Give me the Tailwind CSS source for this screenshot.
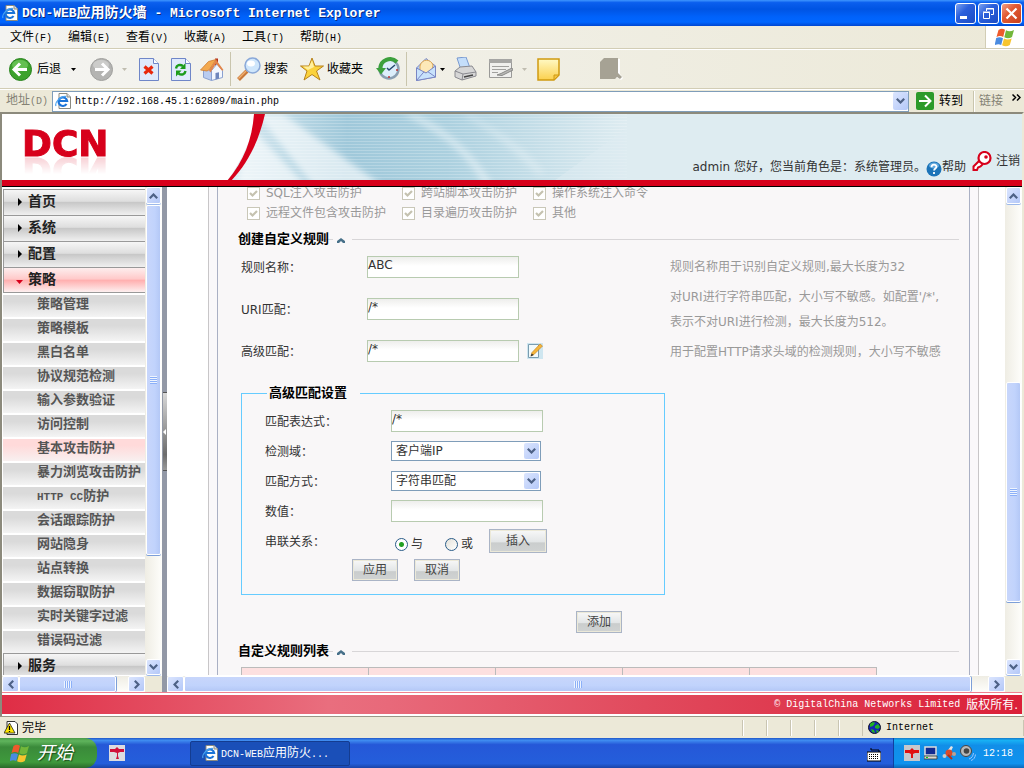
<!DOCTYPE html>
<html lang="zh-CN">
<head>
<meta charset="utf-8">
<title>DCN-WEB应用防火墙</title>
<script src="https://cdn.jsdelivr.net/npm/@tailwindcss/browser@4"></script>
</head>
<body class="h-screen overflow-hidden flex flex-col bg-[#ece9d8] text-black text-xs leading-4 font-['DejaVu_Sans','Noto_Sans_CJK_SC',sans-serif]">

<!-- shared symbols -->
<svg class="hidden">
  <symbol id="ie" viewBox="0 0 16 16"><path d="M4 .5h8l3.500 3.500v11.500H4z" fill="#fff" stroke="#8a8a80"/><path d="M12 .5V4h3.500" fill="#ddd" stroke="#8a8a80"/><path d="M11.500 11a4.300 4.300 0 1 1 .6-3H4" fill="none" stroke="#1b74d8" stroke-width="2.200"/><path d="M1 13C-.5 10 5 3 11 3.500" fill="none" stroke="#4aa3f0" stroke-width="1.200"/></symbol>
  <symbol id="up" viewBox="0 0 9 6"><path d="M.8 5.200 4.500 1.500 8.200 5.200" fill="none" stroke="#4d6185" stroke-width="2.200"/></symbol>
  <symbol id="down" viewBox="0 0 9 6"><path d="M.8.8 4.500 4.500 8.200.8" fill="none" stroke="#4d6185" stroke-width="2.200"/></symbol>
  <symbol id="left" viewBox="0 0 6 9"><path d="M5.200.8 1.500 4.500 5.200 8.200" fill="none" stroke="#4d6185" stroke-width="2.200"/></symbol>
  <symbol id="right" viewBox="0 0 6 9"><path d="M.8.8 4.500 4.500.8 8.200" fill="none" stroke="#4d6185" stroke-width="2.200"/></symbol>
  <symbol id="check" viewBox="0 0 13 13"><path d="M3 6 5.500 8.500 10 4" fill="none" stroke="#c5c2b0" stroke-width="2.200"/></symbol>
  <symbol id="caret" viewBox="0 0 5 3"><path d="M0 0h5L2.500 3z"/></symbol>
  <symbol id="tri" viewBox="0 0 4 8"><path d="M0 0 4 4 0 8z"/></symbol>
  <symbol id="collapse" viewBox="0 0 8 6"><path d="M0 6V4L4 1l4 3v2H6L4 4 2 6z" fill="#477089"/></symbol>
  <symbol id="flag" viewBox="0 0 20 19"><path d="M3.500 2C6 .3 8 .6 10 1.800L8.200 9C6.200 7.800 4 7.700 1.500 9z" fill="#ee5a2b"/><path d="M11 2.300c2.500 1.300 5 1.200 8-.3L17 9c-2.500 1.500-5 1.500-7.700.3z" fill="#72b73a"/><path d="M1.200 10c2.500-1.300 4.800-1 6.800.2L6.200 17C4.200 15.800 2.500 16-.3 17z" fill="#4a8be0"/><path d="M9 10.500c2.500 1.300 5 1.200 7.700 0L14.800 17c-2.500 1.500-5 1.500-7.700.3z" fill="#f7c52e"/></symbol>
</svg>

<!-- title bar -->
<header class="h-[26px] shrink-0 flex items-center pl-0.5 pr-0.5 bg-[linear-gradient(#3f96ff_0%,#0b5fee_10%,#0054e3_35%,#0062fb_65%,#0066ff_85%,#0046d0_100%)]">
  <svg class="w-4 h-4 mr-1"><use href="#ie"/></svg>
  <h1 class="flex-1 text-white font-bold text-[13px] leading-5 whitespace-pre font-['Liberation_Mono','Noto_Sans_CJK_SC',monospace] [text-shadow:1px_1px_0_#0a2a80]">DCN-WEB<span class="text-sm">应用防火墙</span> - Microsoft Internet Explorer</h1>
  <div class="flex gap-[2px]">
    <button aria-label="最小化" class="w-[21px] h-[21px] rounded-[3px] border border-white bg-[linear-gradient(135deg,#7ba1f0,#2a5fdc_40%,#1c4cc4)] flex items-end pl-1 pb-1"><span class="block w-[7px] h-[3px] bg-white"></span></button>
    <button aria-label="还原" class="w-[21px] h-[21px] rounded-[3px] border border-white bg-[linear-gradient(135deg,#7ba1f0,#2a5fdc_40%,#1c4cc4)] flex items-center justify-center"><svg class="w-[11px] h-[11px]" viewBox="0 0 11 11" fill="none" stroke="#fff"><path d="M3.500 3V.5h7v6H8"/><path d="M3 1h8"/><path d="M.5 4.500h6v6h-6zM0 4h7"/></svg></button>
    <button aria-label="关闭" class="w-[21px] h-[21px] rounded-[3px] border border-white bg-[linear-gradient(135deg,#f0a08a,#e25a34_40%,#c8401c)] flex items-center justify-center"><svg class="w-[13px] h-[13px]" viewBox="0 0 13 13"><path d="M1.500 1.500l10 10M11.500 1.500l-10 10" stroke="#fff" stroke-width="2.200"/></svg></button>
  </div>
</header>

<!-- menu bar -->
<nav class="h-[23px] shrink-0 flex items-stretch border-b border-[#d2cdb5] bg-[linear-gradient(90deg,#f4f4f1,#ece9d8)]">
  <div class="flex-1 flex items-center pl-[10px] pt-0.5 text-left">
    <button class="w-[58px] text-left">文件<span class="text-[10px] font-['Liberation_Mono',monospace]">(F)</span></button>
    <button class="w-[58px] text-left">编辑<span class="text-[10px] font-['Liberation_Mono',monospace]">(E)</span></button>
    <button class="w-[58px] text-left">查看<span class="text-[10px] font-['Liberation_Mono',monospace]">(V)</span></button>
    <button class="w-[58px] text-left">收藏<span class="text-[10px] font-['Liberation_Mono',monospace]">(A)</span></button>
    <button class="w-[58px] text-left">工具<span class="text-[10px] font-['Liberation_Mono',monospace]">(T)</span></button>
    <button class="w-[58px] text-left">帮助<span class="text-[10px] font-['Liberation_Mono',monospace]">(H)</span></button>
  </div>
  <div class="w-[39px] bg-white border-l border-[#d2cdb5] flex items-center justify-center"><svg class="w-5 h-[19px]"><use href="#flag"/></svg></div>
</nav>

<!-- toolbar -->
<div class="h-[40px] shrink-0 flex items-center border-t border-b border-t-white border-b-[#d2cdb5] pl-[9px] bg-[linear-gradient(90deg,#f4f4f1,#ece9d8)]">
  <button class="flex items-center"><svg class="w-[23px] h-[23px] mr-[5px]" viewBox="0 0 23 23"><circle cx="11.500" cy="11.500" r="11" fill="#3da22c" stroke="#2b8420"/><ellipse cx="11" cy="7" rx="8" ry="5" fill="#7fd46a" opacity=".6"/><path d="M11 5.500 5 11.500l6 6M5.500 11.500H18" fill="none" stroke="#fff" stroke-width="3"/></svg>后退</button>
  <svg class="w-[5px] h-[3px] ml-[10px] mr-[14px]"><use href="#caret"/></svg>
  <button aria-label="前进"><svg class="w-[23px] h-[23px]" viewBox="0 0 23 23"><circle cx="11.500" cy="11.500" r="11" fill="#b4b4b2" stroke="#a0a09e"/><ellipse cx="11" cy="7" rx="8" ry="5" fill="#dcdcda" opacity=".6"/><path d="M12 5.500l6 6-6 6M17.500 11.500H5" fill="none" stroke="#fff" stroke-width="3"/></svg></button>
  <svg class="w-[5px] h-[3px] ml-[9px] mr-[12px]"><use href="#caret" fill="#c0bdb0"/></svg>
  <button aria-label="停止"><svg class="w-5 h-[23px]" viewBox="0 0 20 23"><path d="M.5.5h14l5 5v17H.5z" fill="#dfeafc" stroke="#6f86c8"/><path d="M14.500.5v5h5" fill="#fff" stroke="#6f86c8"/><path d="M5.500 8.500l8 7M13.500 8.500l-8 7" stroke="#e8280c" stroke-width="3.200"/></svg></button>
  <button aria-label="刷新" class="ml-[12px]"><svg class="w-5 h-[23px]" viewBox="0 0 20 23"><path d="M.5.5h14l5 5v17H.5z" fill="#dfeafc" stroke="#6f86c8"/><path d="M14.500.5v5h5" fill="#fff" stroke="#6f86c8"/><path d="M5 10.500C5.500 7 9 6 12 8M14.500 13C14 16.500 10.500 17.500 7.500 15.500" fill="none" stroke="#1c9c1c" stroke-width="2.400"/><path d="M14.500 5v6H9zM5 18.500v-6h5.500z" fill="#1c9c1c"/></svg></button>
  <button aria-label="主页" class="ml-[9px]"><svg class="w-6 h-[23px]" viewBox="0 0 24 23"><path d="M15 .5h3v7h-3z" fill="#b5301e"/><path d="M3.500 12v7.500l8 3V10L7 7z" fill="#b9ccf0" stroke="#8aa0d0"/><path d="M11.500 12.500 17 6l5.500 6.500v7l-11 3z" fill="#f3f7fe" stroke="#8aa0d0"/><path d="M.5 12 8.500 3.500 16 1.500 9.500 11.500 7 13z" fill="#f3a94f" stroke="#cf7c30" stroke-width=".8"/><path d="M16 1.500 23.500 12l-1.500.8L16 5.500l-5.500 9-1.500-2z" fill="#e2854a"/><path d="M15.500 15l3.500-.8v6.300l-3.500 1z" fill="#6f86bc"/></svg></button>
  <span class="w-px h-[34px] bg-[#c9c5ad] ml-[6px] mr-[6px]"></span>
  <button class="flex items-center"><svg class="w-6 h-6 mr-[3px]" viewBox="0 0 24 24"><path d="M1.500 22.500 10 14" stroke="#c9793a" stroke-width="4"/><path d="M1.500 21.500 9 14" stroke="#f0b070" stroke-width="1.500"/><circle cx="15.500" cy="8.500" r="7.500" fill="#cfe6fb" stroke="#8aa8d8" stroke-width="1.500"/><ellipse cx="14" cy="6.500" rx="4" ry="3" fill="#fff"/></svg>搜索</button>
  <button class="flex items-center ml-[12px]"><svg class="w-6 h-6 mr-[3px]" viewBox="0 0 24 24"><path d="M12 1l3 8h8.500l-7 5 3.500 9-8-5.500L4 23l3-9-6.500-5H9z" fill="#fbd23c" stroke="#b8821c"/><path d="M12 3.500l2 6.500-6 3-5-3.500h6z" fill="#fff0a0"/></svg>收藏夹</button>
  <button aria-label="历史" class="ml-[13px]"><svg class="w-6 h-6" viewBox="0 0 24 24"><circle cx="13" cy="12" r="9.500" fill="#dceefb" stroke="#8a9fb2" stroke-width="2.500"/><path d="M19 8l-6 5-2-2" fill="none" stroke="#284a70" stroke-width="1.500"/><path d="M21 5C15-1 4 3 4.500 12" fill="none" stroke="#3ca03c" stroke-width="4"/><path d="M0 11h10l-5 6.500z" fill="#3ca03c"/><path d="M13 19v2M20 13h2" stroke="#c03030" stroke-width="1.500"/></svg></button>
  <span class="w-px h-[34px] bg-[#c9c5ad] ml-[6px] mr-[9px]"></span>
  <button aria-label="邮件"><svg class="w-5 h-[23px]" viewBox="0 0 20 23"><path d="M.5 10 10 .5 19.500 8v11L.5 22.500z" fill="#b5d4f8" stroke="#7a86c4"/><path d="M4 8c2-8 11-7 13-1l-1 6-6 2-6-2z" fill="#fde9b8" stroke="#e0a850"/><path d="M.5 10 10 15l9.500-7v11L.5 22.500z" fill="#c8e2fc" stroke="#7a86c4"/><path d="M.5 22.500 8 13.800M19.500 19 12 13.800" stroke="#7a86c4"/></svg></button>
  <svg class="w-[5px] h-[3px] ml-[4px] mr-[9px]"><use href="#caret"/></svg>
  <button aria-label="打印"><svg class="w-[23px] h-6" viewBox="0 0 23 24"><path d="M3 1l9-1 4 11-9 2z" fill="#c4defa" stroke="#7a9ad0"/><path d="M1 14l5-4 12-1 4 6v4L8 23l-7-3z" fill="#d6d6d6" stroke="#8a8a90"/><path d="M1 14l8 3 13-2M9 17l-1 6" fill="none" stroke="#8a8a90"/><path d="M10 20l9-2" stroke="#444" stroke-width="1.500"/></svg></button>
  <button aria-label="编辑" class="ml-[12px]"><svg class="w-6 h-5" viewBox="0 0 24 20"><path d="M.5.5h22v18H.5z" fill="#efefed" stroke="#9a9a98"/><path d="M0 0h23v4H0z" fill="#a6a6a4"/><path d="M3 7.500h17M3 10.500h14M3 13.500h6" stroke="#a0a09e"/><path d="M8 16l4-1.500L23 9l1 2-11 5.500z" fill="#b8b8b6" stroke="#8a8a88"/></svg></button>
  <svg class="w-[5px] h-[3px] ml-[9px] mr-[10px]"><use href="#caret" fill="#c0bdb0"/></svg>
  <button aria-label="便笺"><svg class="w-[23px] h-[23px]" viewBox="0 0 23 23"><defs><linearGradient id="note" x2="0" y2="1"><stop offset="0" stop-color="#fff9c4"/><stop offset="1" stop-color="#fbd04e"/></linearGradient></defs><path d="M1 1h21v16l-5 5H1z" fill="url(#note)" stroke="#d09a10" stroke-width="1.500"/><path d="M17 22v-5h5z" fill="#f3c244" stroke="#d09a10"/></svg></button>
  <svg class="w-[23px] h-[23px] ml-[40px]" viewBox="0 0 23 23"><path d="M5 1h15v15l3 4-2 2-3-2H1V5z" fill="#fff"/><path d="M4 0h14v15l4 4-2 2-3-2-2 2H0V4z" fill="#a6a294"/></svg>
</div>

<!-- address bar -->
<div class="h-[23px] shrink-0 flex items-center border-t border-white bg-[#ece9d8] pl-[6px]">
  <label for="url" class="w-[46px] text-[#848274]">地址<span class="text-[10px] font-['Liberation_Mono',monospace]">(D)</span></label>
  <div class="flex-1 h-[21px] flex items-center bg-white border border-[#7f9db9] pl-0.5">
    <svg class="w-4 h-4 mr-1"><use href="#ie"/></svg>
    <input id="url" value="http://192.168.45.1:62809/main.php" class="flex-1 min-w-0 pt-0.5 outline-none text-[10px] leading-4 font-['Liberation_Mono',monospace]">
    <button aria-label="展开" class="w-[15px] h-[18px] rounded-[2px] bg-[linear-gradient(135deg,#dbe5fe,#b4c8f8)] flex items-center justify-center"><svg class="w-[9px] h-[6px]"><use href="#down"/></svg></button>
  </div>
  <button class="flex items-center gap-[5px] ml-[7px]"><svg class="w-[18px] h-[18px]" viewBox="0 0 18 18"><rect width="18" height="18" rx="2" fill="#2c9a2a"/><path d="M9 3.500 14.500 9 9 14.500M3 9h11" fill="none" stroke="#fff" stroke-width="2"/></svg>转到</button>
  <span class="w-0.5 h-[21px] border-l border-[#c9c5ad] bg-white ml-[10px] mr-[4px]"></span>
  <span class="text-[#848274]">链接</span>
  <svg class="w-[9px] h-[7px] ml-[9px] mr-[3px] mb-2" viewBox="0 0 9 7"><path d="M.5.5l3 3-3 3M5 .5l3 3-3 3" fill="none" stroke="#000" stroke-width="1.500"/></svg>
</div>

<!-- browser viewport -->
<main class="flex-1 min-h-0 flex flex-col border-t-2 border-t-[#8c8a7c] border-l-2 border-l-[#8c8a7c] border-r-2 border-r-[#ece9d8] bg-white">

  <!-- site banner -->
  <section class="h-[73px] shrink-0 relative flex items-end border-b border-black bg-[#deecf1]">
    <svg class="absolute inset-0 w-full h-[72px]" viewBox="0 0 1020 72" preserveAspectRatio="xMinYMin slice">
      <defs>
        <linearGradient id="sky"><stop offset="0" stop-color="#d9eaf1"/><stop offset=".3" stop-color="#9fc8da"/><stop offset=".55" stop-color="#abd0df"/><stop offset="1" stop-color="#deecf1"/></linearGradient>
        <pattern id="lines" width="4" height="3" patternUnits="userSpaceOnUse"><path d="M0 .5h4" stroke="#fff" stroke-opacity=".22"/></pattern>
        <filter id="soft"><feGaussianBlur stdDeviation="3"/></filter>
      </defs>
      <path d="M225 0h400v72H225z" fill="url(#sky)"/>
      <path d="M225 0h400v72H225z" fill="url(#lines)"/>
      <g filter="url(#soft)" fill="#fff">
        <path d="M255 0h26l100 72h-70z" opacity=".6"/>
        <path d="M245 10l60 62h-70z" opacity=".6"/>
        <path d="M400 0h14c35 15 62 45 78 72h-10C465 40 440 20 400 0z" opacity=".4"/>
        <path d="M460 0h8c25 15 55 30 75 60h-8C510 35 490 18 460 0z" opacity=".25"/>
      </g>
      <path d="M625 14l-80 58h80z" fill="#deecf1" opacity=".5"/>
      <path d="M0 0h255c-6 26-16 48-30 67H0z" fill="#fff"/>
      <path d="M252 0h11c-6 26-16 48-34 67h-4c17-20 25-41 27-67z" fill="#d7001b"/>
      <path d="M0 66h1400v6H0z" fill="#d7001b"/>
    </svg>
    <div class="relative w-full flex items-start pl-[20px] pr-0.5 h-[56px] text-[#333]">
      <strong class="flex-1 text-[36px] leading-[28px] font-bold text-[#d7001b] font-['DejaVu_Sans',sans-serif] [-webkit-text-stroke:1px_#d7001b] [-webkit-box-reflect:below_-2px_linear-gradient(transparent_35%,rgb(0_0_0/0.2))]">DCN</strong>
      <p class="mt-[28px]">admin 您好<span class="font-['Noto_Sans_CJK_TC',sans-serif]">，</span>您当前角色是<span class="font-['Noto_Sans_CJK_TC',sans-serif]">：</span>系统管理员。</p>
      <a href="#" class="flex items-center mt-[27px]"><svg class="w-4 h-4 mt-1" viewBox="0 0 16 16"><circle cx="8" cy="8" r="7.500" fill="#1c74b8"/><ellipse cx="8" cy="4.500" rx="5" ry="3" fill="#7fc0ee" opacity=".7"/><path d="M5.500 6.200c0-3.400 5-3.200 5-.4 0 1.800-2.400 1.700-2.400 3.700M8 11v2" fill="none" stroke="#fff" stroke-width="1.800"/></svg>帮助</a>
      <a href="#" class="flex items-center gap-1 ml-[6px] mt-[21px]"><svg class="w-5 h-5" viewBox="0 0 20 20"><path d="M7.500 9.500 1.500 15.500v3.500h3.500l1-2.500 2.500-1 2.500-2.500" fill="#fff" stroke="#d7001b" stroke-width="2"/><circle cx="12.500" cy="7" r="6" fill="#fff" stroke="#d7001b" stroke-width="2.200"/><circle cx="14" cy="6" r="1.800" fill="#d7001b"/></svg>注销</a>
    </div>
  </section>

  <div class="flex-1 min-h-0 flex">

    <!-- navigation frame -->
    <aside class="w-[160px] shrink-0 flex flex-col">
      <div class="flex-1 min-h-0 flex">
        <ul class="flex-1 min-h-0 overflow-hidden pl-px pt-0.5 text-sm leading-5 font-bold text-[#222] font-['Liberation_Mono','Noto_Sans_CJK_SC',monospace]">
          <li class="h-[26px] border-t border-l border-[#999] bg-[linear-gradient(#f6f6f6,#dedede_45%,#c8c8c8_50%,#f0f0f0)]"><a href="#" class="flex items-center h-6 pl-[14px] gap-[6px]"><svg class="w-1 h-2"><use href="#tri"/></svg>首页</a></li>
          <li class="h-[26px] border-t border-l border-[#999] bg-[linear-gradient(#f6f6f6,#dedede_45%,#c8c8c8_50%,#f0f0f0)]"><a href="#" class="flex items-center h-6 pl-[14px] gap-[6px]"><svg class="w-1 h-2"><use href="#tri"/></svg>系统</a></li>
          <li class="h-[26px] border-t border-l border-[#999] bg-[linear-gradient(#f6f6f6,#dedede_45%,#c8c8c8_50%,#f0f0f0)]"><a href="#" class="flex items-center h-6 pl-[14px] gap-[6px]"><svg class="w-1 h-2"><use href="#tri"/></svg>配置</a></li>
          <li>
            <a href="#" class="flex items-center h-[26px] pl-3 gap-[5px] border-t border-b border-l border-[#999] bg-[linear-gradient(#fdeeee,#ffcaca_45%,#ffb0b0_52%,#fdf0f0)]"><svg class="w-[7px] h-1 mt-1" viewBox="0 0 7 4"><path d="M0 0h7L3.500 4z" fill="#d7001b"/></svg>策略</a>
            <ul class="flex flex-col gap-[2px] pt-0.5 text-[13px] leading-5 text-[#555]">
              <li class="h-[22px] pl-[34px] whitespace-nowrap bg-[linear-gradient(#dadada_30%,#f4f4f4)]"><a href="#">策略管理</a></li>
              <li class="h-[22px] pl-[34px] whitespace-nowrap bg-[linear-gradient(#dadada_30%,#f4f4f4)]"><a href="#">策略模板</a></li>
              <li class="h-[22px] pl-[34px] whitespace-nowrap bg-[linear-gradient(#dadada_30%,#f4f4f4)]"><a href="#">黑白名单</a></li>
              <li class="h-[22px] pl-[34px] whitespace-nowrap bg-[linear-gradient(#dadada_30%,#f4f4f4)]"><a href="#">协议规范检测</a></li>
              <li class="h-[22px] pl-[34px] whitespace-nowrap bg-[linear-gradient(#dadada_30%,#f4f4f4)]"><a href="#">输入参数验证</a></li>
              <li class="h-[22px] pl-[34px] whitespace-nowrap bg-[linear-gradient(#dadada_30%,#f4f4f4)]"><a href="#">访问控制</a></li>
              <li class="h-[22px] pl-[34px] whitespace-nowrap bg-[linear-gradient(#ffdada_30%,#f8f0f0)]"><a href="#">基本攻击防护</a></li>
              <li class="h-[22px] pl-[34px] whitespace-nowrap bg-[linear-gradient(#dadada_30%,#f4f4f4)]"><a href="#">暴力浏览攻击防护</a></li>
              <li class="h-[22px] pl-[34px] whitespace-nowrap bg-[linear-gradient(#dadada_30%,#f4f4f4)]"><a href="#"><span class="text-[11px]">HTTP CC</span>防护</a></li>
              <li class="h-[22px] pl-[34px] whitespace-nowrap bg-[linear-gradient(#dadada_30%,#f4f4f4)]"><a href="#">会话跟踪防护</a></li>
              <li class="h-[22px] pl-[34px] whitespace-nowrap bg-[linear-gradient(#dadada_30%,#f4f4f4)]"><a href="#">网站隐身</a></li>
              <li class="h-[22px] pl-[34px] whitespace-nowrap bg-[linear-gradient(#dadada_30%,#f4f4f4)]"><a href="#">站点转换</a></li>
              <li class="h-[22px] pl-[34px] whitespace-nowrap bg-[linear-gradient(#dadada_30%,#f4f4f4)]"><a href="#">数据窃取防护</a></li>
              <li class="h-[22px] pl-[34px] whitespace-nowrap bg-[linear-gradient(#dadada_30%,#f4f4f4)]"><a href="#">实时关键字过滤</a></li>
              <li class="h-[22px] pl-[34px] whitespace-nowrap bg-[linear-gradient(#dadada_30%,#f4f4f4)]"><a href="#">错误码过滤</a></li>
            </ul>
          </li>
          <li class="h-[26px] border-t border-l border-[#999] bg-[linear-gradient(#f6f6f6,#dedede_45%,#c8c8c8_50%,#f0f0f0)]"><a href="#" class="flex items-center h-6 pl-[14px] gap-[6px]"><svg class="w-1 h-2"><use href="#tri"/></svg>服务</a></li>
        </ul>
        <div class="w-[17px] flex flex-col items-stretch bg-[linear-gradient(90deg,#efede4,#fefefb)] pl-px pr-px">
          <button aria-label="向上滚动" class="h-[17px] rounded-[2px] border border-white bg-[linear-gradient(135deg,#dbe5fe,#b4c8f8)] shadow-[0_1px_0_#9db9ea] flex items-center justify-center"><svg class="w-[9px] h-[6px]"><use href="#up"/></svg></button>
          <div class="h-[350px] mt-px rounded-[2px] border border-white bg-[linear-gradient(90deg,#c8d6fb,#c1d3fc_60%,#b4c8f6)] shadow-[0_1px_0_#7d9fd8] flex items-center justify-center"><span class="w-[7px] h-2 bg-[repeating-linear-gradient(#eef4fe_0_1px,#8cb0f8_1px_2px)]"></span></div>
          <button aria-label="向下滚动" class="h-4 mt-auto rounded-[2px] border border-white bg-[linear-gradient(135deg,#dbe5fe,#b4c8f8)] shadow-[0_1px_0_#9db9ea] flex items-center justify-center"><svg class="w-[9px] h-[6px]"><use href="#down"/></svg></button>
        </div>
      </div>
      <div class="h-4 mt-px flex bg-[#ece9d8]">
        <div class="flex-1 flex bg-[linear-gradient(#efede4,#fefefb)]">
          <button aria-label="向左滚动" class="w-[17px] rounded-[2px] border border-white bg-[linear-gradient(135deg,#dbe5fe,#b4c8f8)] flex items-center justify-center"><svg class="w-[6px] h-[9px]"><use href="#left"/></svg></button>
          <div class="w-[97px] rounded-[2px] border border-white bg-[linear-gradient(#c8d6fb,#c1d3fc_60%,#b4c8f6)] shadow-[1px_0_0_#7d9fd8] flex items-center justify-center"><span class="w-2 h-[7px] bg-[repeating-linear-gradient(90deg,#eef4fe_0_1px,#8cb0f8_1px_2px)]"></span></div>
          <button aria-label="向右滚动" class="w-[17px] ml-auto rounded-[2px] border border-white bg-[linear-gradient(135deg,#dbe5fe,#b4c8f8)] flex items-center justify-center"><svg class="w-[6px] h-[9px]"><use href="#right"/></svg></button>
        </div>
        <div class="w-[17px]"></div>
      </div>
    </aside>

    <!-- splitter -->
    <div class="w-[5px] shrink-0 bg-[#9298a6] flex flex-col justify-center items-end pb-4">
      <button aria-label="收起导航" class="w-1 h-[79px] bg-[linear-gradient(#d8d8d8,#6c6c6c_80%,#999)] border-t border-b border-[#555] flex items-center"><svg class="w-[3px] h-[6px]" viewBox="0 0 3 6"><path d="M3 0v6L0 3z" fill="#fff"/></svg></button>
    </div>

    <!-- content frame -->
    <div class="flex-1 min-w-0 flex flex-col">
      <div class="flex-1 min-h-0 flex">
        <div class="flex-1 min-w-0 overflow-hidden pl-[41px] pr-[26px]">
          <div class="border-l border-r border-[#c8c6c8] bg-[#faf8fa] px-2">
            <form class="border-l border-r border-[#aab0c4] bg-[#f9f7f8] pl-[20px] pr-[10px] text-[#333]">

              <!-- the pane is scrolled, so the first option row is cut by its top edge -->
              <div class="-mt-1 pl-[9px] grid grid-cols-[155px_131px_1fr] text-[#999]">
                <label class="h-5 flex items-center gap-[6px]"><span class="grid"><input type="checkbox" checked disabled class="[grid-area:1/1] appearance-none w-[13px] h-[13px] border border-[#c9c7b8] bg-white"><svg class="[grid-area:1/1] w-[13px] h-[13px]"><use href="#check"/></svg></span>SQL注入攻击防护</label>
                <label class="h-5 flex items-center gap-[6px]"><span class="grid"><input type="checkbox" checked disabled class="[grid-area:1/1] appearance-none w-[13px] h-[13px] border border-[#c9c7b8] bg-white"><svg class="[grid-area:1/1] w-[13px] h-[13px]"><use href="#check"/></svg></span>跨站脚本攻击防护</label>
                <label class="h-5 flex items-center gap-[6px]"><span class="grid"><input type="checkbox" checked disabled class="[grid-area:1/1] appearance-none w-[13px] h-[13px] border border-[#c9c7b8] bg-white"><svg class="[grid-area:1/1] w-[13px] h-[13px]"><use href="#check"/></svg></span>操作系统注入命令</label>
                <label class="h-5 flex items-center gap-[6px]"><span class="grid"><input type="checkbox" checked disabled class="[grid-area:1/1] appearance-none w-[13px] h-[13px] border border-[#c9c7b8] bg-white"><svg class="[grid-area:1/1] w-[13px] h-[13px]"><use href="#check"/></svg></span>远程文件包含攻击防护</label>
                <label class="h-5 flex items-center gap-[6px]"><span class="grid"><input type="checkbox" checked disabled class="[grid-area:1/1] appearance-none w-[13px] h-[13px] border border-[#c9c7b8] bg-white"><svg class="[grid-area:1/1] w-[13px] h-[13px]"><use href="#check"/></svg></span>目录遍历攻击防护</label>
                <label class="h-5 flex items-center gap-[6px]"><span class="grid"><input type="checkbox" checked disabled class="[grid-area:1/1] appearance-none w-[13px] h-[13px] border border-[#c9c7b8] bg-white"><svg class="[grid-area:1/1] w-[13px] h-[13px]"><use href="#check"/></svg></span>其他</label>
              </div>

              <h2 class="mt-[6px] h-5 flex items-center text-[13px] font-bold text-black"><span class="pr-1 bg-[linear-gradient(#d8d6d8,#d8d6d8)] bg-[length:100%_1px] bg-center bg-no-repeat">创建自定义规则</span><svg class="w-2 h-[6px] ml-1 mr-[7px] mt-0.5"><use href="#collapse"/></svg><span class="flex-1 h-px bg-[#d8d6d8]"></span></h2>

              <div class="pl-[3px] -mt-[3px]">
                <div class="h-[42px] flex items-center"><label for="name" class="w-[126px]">规则名称<span class="font-['Noto_Sans_CJK_TC',sans-serif]">：</span></label><span class="w-[303px]"><input id="name" value="ABC" class="w-[152px] h-[22px] pb-1 border border-[#b8cbb0] bg-[linear-gradient(#eeeeec,#fff_45%)] outline-none"></span><span class="text-[#999]">规则名称用于识别自定义规则,最大长度为32</span></div>
                <div class="h-[42px] flex items-center"><label for="uri" class="w-[126px]">URI匹配<span class="font-['Noto_Sans_CJK_TC',sans-serif]">：</span></label><span class="w-[303px]"><input id="uri" value="/*" class="w-[152px] h-[22px] pb-1 border border-[#b8cbb0] bg-[linear-gradient(#eeeeec,#fff_45%)] outline-none"></span><span class="text-[#999] leading-6 whitespace-nowrap">对URI进行字符串匹配<span class="font-['Noto_Sans_CJK_TC',sans-serif]">，</span>大小写不敏感。如配置'/*',<br>表示不对URI进行检测<span class="font-['Noto_Sans_CJK_TC',sans-serif]">，</span>最大长度为512。</span></div>
                <div class="h-[42px] flex items-center"><label for="adv" class="w-[126px]">高级匹配<span class="font-['Noto_Sans_CJK_TC',sans-serif]">：</span></label><span class="w-[303px] flex items-center gap-2"><input id="adv" value="/*" class="w-[152px] h-[22px] pb-1 border border-[#b8cbb0] bg-[linear-gradient(#eeeeec,#fff_45%)] outline-none"><button type="button" aria-label="编辑高级匹配"><svg class="w-4 h-4" viewBox="0 0 16 16"><path d="M0 0h16v16H0z" fill="#cfe6f0"/><path d="M1.500 1.500h10v13h-10z" fill="#f2fafc" stroke="#7a9cb0"/><path d="M4 13l1-3.500L13 1l2.500 2L7 11.500z" fill="#f5b53a" stroke="#c07a18" stroke-width=".6"/><path d="M3.500 13.500l1.200-3 2 1.500z" fill="#333"/></svg></button></span><span class="text-[#999]">用于配置HTTP请求头域的检测规则<span class="font-['Noto_Sans_CJK_TC',sans-serif]">，</span>大小写不敏感</span></div>
              </div>

              <fieldset class="ml-[3px] mt-[11px] w-[424px] border border-[#66ccff] pl-[23px] pb-[10px]">
                <legend class="w-[93px] ml-[2px] h-5 leading-5 pl-0.5 text-[13px] font-bold text-black">高级匹配设置</legend>
                <div class="h-[30px] mt-[3px] flex items-center"><label for="expr" class="w-[126px]">匹配表达式<span class="font-['Noto_Sans_CJK_TC',sans-serif]">：</span></label><input id="expr" value="/*" class="w-[152px] h-[22px] pb-1 border border-[#b8cbb0] bg-[linear-gradient(#eeeeec,#fff_45%)] outline-none"></div>
                <div class="h-[30px] flex items-center"><label for="field" class="w-[126px]">检测域<span class="font-['Noto_Sans_CJK_TC',sans-serif]">：</span></label><span class="grid w-[150px] items-center"><select id="field" class="[grid-area:1/1] appearance-none h-5 pl-1 border border-[#7f9db9] bg-white outline-none"><option>客户端IP</option></select><span class="[grid-area:1/1] justify-self-end mr-0.5 w-[15px] h-4 rounded-[2px] pointer-events-none bg-[linear-gradient(135deg,#dbe5fe,#b4c8f8)] flex items-center justify-center"><svg class="w-[9px] h-[6px]"><use href="#down"/></svg></span></span></div>
                <div class="h-[30px] flex items-center"><label for="mode" class="w-[126px]">匹配方式<span class="font-['Noto_Sans_CJK_TC',sans-serif]">：</span></label><span class="grid w-[150px] items-center"><select id="mode" class="[grid-area:1/1] appearance-none h-5 pl-1 border border-[#7f9db9] bg-white outline-none"><option>字符串匹配</option></select><span class="[grid-area:1/1] justify-self-end mr-0.5 w-[15px] h-4 rounded-[2px] pointer-events-none bg-[linear-gradient(135deg,#dbe5fe,#b4c8f8)] flex items-center justify-center"><svg class="w-[9px] h-[6px]"><use href="#down"/></svg></span></span></div>
                <div class="h-[30px] flex items-center"><label for="num" class="w-[126px]">数值<span class="font-['Noto_Sans_CJK_TC',sans-serif]">：</span></label><input id="num" class="w-[152px] h-[22px] pb-1 border border-[#b8cbb0] bg-[linear-gradient(#eeeeec,#fff_45%)] outline-none"></div>
                <div class="h-[30px] flex items-center"><span class="w-[130px]">串联关系<span class="font-['Noto_Sans_CJK_TC',sans-serif]">：</span></span>
                  <label class="flex items-center gap-[3px] w-[50px] pt-[6px]"><input type="radio" name="rel" checked class="appearance-none w-[13px] h-[13px] rounded-full border border-[#2a5c88] bg-[radial-gradient(circle,#22a022_0_2px,#fff_3px)]">与</label>
                  <label class="flex items-center gap-[3px] w-[44px] pt-[6px]"><input type="radio" name="rel" class="appearance-none w-[13px] h-[13px] rounded-full border border-[#2a5c88] bg-[linear-gradient(135deg,#e4e2da,#fff)]">或</label>
                  <button type="button" class="w-[58px] h-6 border border-[#aab4c6] bg-[linear-gradient(#f8f8f8,#e2e5e6_55%,#cacdcd_58%,#d0d3d3)] shadow-[inset_0_0_0_1px_#ece9d8] text-[#444]">插入</button>
                </div>
                <div class="h-7 pl-[87px] flex items-center gap-4">
                  <button type="button" class="w-[46px] h-[22px] border border-[#aab4c6] bg-[linear-gradient(#f8f8f8,#e2e5e6_55%,#cacdcd_58%,#d0d3d3)] shadow-[inset_0_0_0_1px_#ece9d8] text-[#444]">应用</button>
                  <button type="button" class="w-[46px] h-[22px] border border-[#aab4c6] bg-[linear-gradient(#f8f8f8,#e2e5e6_55%,#cacdcd_58%,#d0d3d3)] shadow-[inset_0_0_0_1px_#ece9d8] text-[#444]">取消</button>
                </div>
              </fieldset>

              <div class="mt-4 w-[722px] flex justify-center">
                <button type="button" class="w-[46px] h-[22px] border border-[#aab4c6] bg-[linear-gradient(#f8f8f8,#e2e5e6_55%,#cacdcd_58%,#d0d3d3)] shadow-[inset_0_0_0_1px_#ece9d8] text-[#444]">添加</button>
              </div>

              <h2 class="mt-[8px] h-5 flex items-center text-[13px] font-bold text-black"><span class="pr-1 bg-[linear-gradient(#d8d6d8,#d8d6d8)] bg-[length:100%_1px] bg-center bg-no-repeat">自定义规则列表</span><svg class="w-2 h-[6px] ml-1 mr-[7px] mt-0.5"><use href="#collapse"/></svg><span class="flex-1 h-px bg-[#d8d6d8]"></span></h2>
              <table class="ml-[3px] mt-[6px] w-[636px] table-fixed border-collapse bg-[#fde0e0]"><tbody><tr class="h-[26px]"><td class="border border-[#bbb]"></td><td class="border border-[#bbb]"></td><td class="border border-[#bbb]"></td><td class="border border-[#bbb]"></td><td class="border border-[#bbb]"></td></tr></tbody></table>
            </form>
          </div>
        </div>
        <div class="w-[17px] shrink-0 flex flex-col bg-[linear-gradient(90deg,#efede4,#fefefb)] pl-px pr-px">
          <button aria-label="向上滚动" class="h-[17px] rounded-[2px] border border-white bg-[linear-gradient(135deg,#dbe5fe,#b4c8f8)] shadow-[0_1px_0_#9db9ea] flex items-center justify-center"><svg class="w-[9px] h-[6px]"><use href="#up"/></svg></button>
          <div class="h-[220px] mt-[178px] rounded-[2px] border border-white bg-[linear-gradient(90deg,#c8d6fb,#c1d3fc_60%,#b4c8f6)] shadow-[0_1px_0_#7d9fd8] flex items-center justify-center"><span class="w-[7px] h-2 bg-[repeating-linear-gradient(#eef4fe_0_1px,#8cb0f8_1px_2px)]"></span></div>
          <button aria-label="向下滚动" class="h-4 mt-auto rounded-[2px] border border-white bg-[linear-gradient(135deg,#dbe5fe,#b4c8f8)] shadow-[0_1px_0_#9db9ea] flex items-center justify-center"><svg class="w-[9px] h-[6px]"><use href="#down"/></svg></button>
        </div>
      </div>
      <div class="h-4 mt-px flex bg-[#ece9d8]">
        <div class="flex-1 flex bg-[linear-gradient(#efede4,#fefefb)]">
          <button aria-label="向左滚动" class="w-[17px] rounded-[2px] border border-white bg-[linear-gradient(135deg,#dbe5fe,#b4c8f8)] flex items-center justify-center"><svg class="w-[6px] h-[9px]"><use href="#left"/></svg></button>
          <div class="flex-1 mr-[17px] rounded-[2px] border border-white bg-[linear-gradient(#c8d6fb,#c1d3fc_60%,#b4c8f6)] shadow-[1px_0_0_#7d9fd8] flex items-center justify-center"><span class="w-2 h-[7px] bg-[repeating-linear-gradient(90deg,#eef4fe_0_1px,#8cb0f8_1px_2px)]"></span></div>
          <button aria-label="向右滚动" class="w-[17px] rounded-[2px] border border-white bg-[linear-gradient(135deg,#dbe5fe,#b4c8f8)] flex items-center justify-center"><svg class="w-[6px] h-[9px]"><use href="#right"/></svg></button>
        </div>
        <div class="w-[17px]"></div>
      </div>
    </div>
  </div>

  <!-- copyright strip -->
  <div class="shrink-0 border-t border-[#f08090] pt-0.5 pb-0.5 bg-white">
    <div class="h-[19px] flex items-center justify-end pr-1 text-white text-xs bg-[linear-gradient(90deg,#df2d45,#e96e7e_32%,#e8697a_38%,#e14a5d_63%,#db2039)]"><span class="text-[10px] whitespace-pre font-['Liberation_Mono',monospace]">© DigitalChina Networks Limited </span>版权所有.</div>
  </div>
</main>

<!-- status bar -->
<div class="h-[22px] shrink-0 flex items-center border-t border-[#9a9788] pl-1 bg-[#ece9d8]">
  <svg class="w-[14px] h-[14px] mr-1" viewBox="0 0 14 14"><path d="M3 .5h8l2.500 2.500v10.500H3z" fill="#fff" stroke="#333"/><path d="M5.500 2 11 12H0z" fill="#fde400" stroke="#222" stroke-width=".8"/><path d="M5.500 5v4M5.500 10v1" stroke="#000" stroke-width="1.300"/></svg>
  <span class="flex-1">完毕</span>
  <div class="flex h-4">
    <span class="w-6 border-l border-[#c9c5b2] shadow-[inset_1px_0_0_#fff]"></span><span class="w-6 border-l border-[#c9c5b2] shadow-[inset_1px_0_0_#fff]"></span><span class="w-6 border-l border-[#c9c5b2] shadow-[inset_1px_0_0_#fff]"></span><span class="w-6 border-l border-[#c9c5b2] shadow-[inset_1px_0_0_#fff]"></span><span class="w-6 border-l border-[#c9c5b2] shadow-[inset_1px_0_0_#fff]"></span>
    <span class="w-[162px] pl-[5px] border-l border-r border-[#c9c5b2] flex items-center gap-[5px] text-[10px] font-['Liberation_Mono',monospace]"><svg class="w-[13px] h-[13px]" viewBox="0 0 13 13"><circle cx="6.500" cy="6.500" r="6" fill="#1428b4" stroke="#112"/><path d="M2 3c2-2 4-2 5-1L5 5 2 6zM7 5l3-2 2 3-2 2-3-1zM3 8l3 1 1 3-3-1zM8 9l3 1-2 2z" fill="#22b422"/></svg>Internet</span>
  </div>
</div>

<!-- taskbar -->
<footer class="h-[30px] shrink-0 flex items-center bg-[linear-gradient(#1f56c8_0%,#3f8cf0_8%,#2558d8_22%,#245edb_85%,#1a44a8_100%)] text-white">
  <button class="w-[97px] h-full pl-[10px] flex items-center gap-[7px] rounded-r-xl bg-[linear-gradient(#4a9a4a,#5fb45c_10%,#3a8a3a_30%,#3f9a3c_80%,#2a6a2a)] text-lg leading-6 italic [text-shadow:1px_1px_1px_#1a4a1a]"><svg class="w-5 h-[19px]"><use href="#flag"/></svg>开始</button>
  <svg class="w-4 h-4 ml-3" viewBox="0 0 16 16"><path d="M0 0h16v16H0z" fill="#dcdce0"/><path d="M1 4h5l2-2 2 2h5v3h-4l-2 1v3l1 3H7l1-3V8L5 7H1z" fill="#d0103a"/></svg>
  <button class="w-40 h-[25px] ml-[65px] pl-[11px] flex items-center gap-[3px] rounded-[2px] bg-[#1a4fb8] border border-[#143c90] text-left"><svg class="w-4 h-4"><use href="#ie"/></svg><span class="pt-0.5 text-[10px] font-['Liberation_Mono','Noto_Sans_CJK_SC',monospace]">DCN-WEB<span class="text-xs">应用防火</span>...</span></button>
  <svg class="w-[14px] h-[14px] ml-auto mr-3 mt-1" viewBox="0 0 14 14"><path d="M4 0v2h8v2" fill="none" stroke="#000"/><path d="M0 4h14v9H0z" fill="#fff" stroke="#000"/><path d="M2 6.500h10M2 8.500h10M2 10.500h10" stroke="#000" stroke-dasharray="1 1"/></svg>
  <div class="h-full w-[131px] pl-[10px] flex items-center gap-[3px] border-l border-[#1040a0] bg-[linear-gradient(#1478c8_0%,#18b0f4_8%,#118ee8_25%,#0f92ee_85%,#0c68b8_100%)]">
    <svg class="w-4 h-4" viewBox="0 0 16 16"><path d="M0 0h16v16H0z" fill="#c8c8cc"/><path d="M1 5h5l2-2 2 2h5v3h-4l-2 1v4H7V9L5 8H1z" fill="#e01010"/></svg>
    <svg class="w-[14px] h-[14px] ml-px" viewBox="0 0 14 14"><path d="M1 1h11v8H1z" fill="#112a90" stroke="#ddd" stroke-width="1.500"/><path d="M0 10h13v3H0z" fill="#d8d8d0" stroke="#333" stroke-width=".8"/><path d="M2 11.500h2" stroke="#1c1"/></svg>
    <svg class="w-[15px] h-[14px] ml-px" viewBox="0 0 15 14"><path d="M9 0l2 1-2 4-3-1z" fill="#e4e4e4"/><circle cx="7" cy="7" r="3.500" fill="#d84a2c"/><circle cx="2.500" cy="10" r="2" fill="#ccc"/><circle cx="12" cy="8" r="2" fill="#c0a090"/><path d="M6 9l4 4" stroke="#b03018" stroke-width="2"/></svg>
    <svg class="w-4 h-4" viewBox="0 0 16 16"><circle cx="6" cy="6" r="5.500" fill="#b8b8b8" stroke="#444"/><circle cx="6.500" cy="6" r="2.800" fill="#444"/><path d="M9 14c3-1 4-3 4.500-6M11 15.500c3-1 4-3 4.500-6" fill="none" stroke="#9ac4ff"/></svg>
    <span class="ml-[4px] pt-0.5 text-[10px] font-['Liberation_Mono',monospace]">12:18</span>
  </div>
</footer>
</body>
</html>
